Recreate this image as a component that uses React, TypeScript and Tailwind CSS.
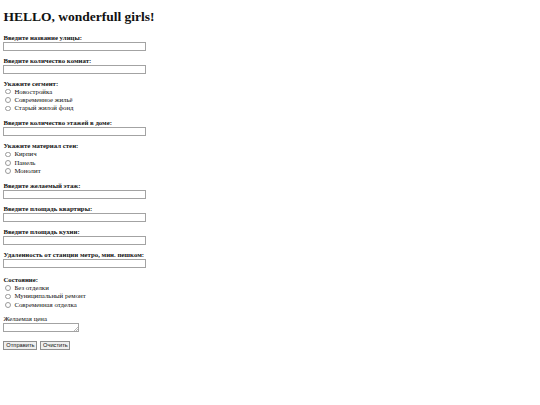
const fields1 = ['Введите название улицы:', 'Введите количество комнат:'];

function TextField({ label }: { label: string }) {
  return (
    <div className="mb-[6px]">
      <div className="h-[8px] font-bold leading-[8px]">{label}</div>
      <div className="h-[9px] w-[143px] border border-[#a3a3a3] bg-white" />
    </div>
  );
}

function RadioGroup({ label, options, last }: { label: string; options: string[]; last?: boolean }) {
  return (
    <div className={last ? 'mb-[6px]' : 'mb-[6.5px]'}>
      <div className="h-[8px] font-bold leading-[8px]">{label}</div>
      {options.map((o) => (
        <div key={o} className="flex h-[8.4px] items-center">
          <span className="ml-[2px] mr-[3.5px] h-[5.5px] w-[5.5px] rounded-full border border-[#9a9a9a] bg-white" />
          <span className="leading-[8px]">{o}</span>
        </div>
      ))}
    </div>
  );
}

export default function App() {
  return (
    <div
      className="min-h-[405px] bg-white px-[3.4px] text-[6.8px] text-[#111]"
      style={{ fontFamily: '"Liberation Serif", serif' }}
    >
      <h1 className="pt-[9px] pb-[9px] text-[13.5px] font-bold leading-[15.5px]">
        HELLO, wonderfull girls!
      </h1>
      <form>
        {fields1.map((f) => (
          <TextField key={f} label={f} />
        ))}
        <RadioGroup
          label="Укажите сегмент:"
          options={['Новостройка', 'Современное жильё', 'Старый жилой фонд']}
        />
        <TextField label="Введите количество этажей в доме:" />
        <RadioGroup label="Укажите материал стен:" options={['Кирпич', 'Панель', 'Монолит']} />
        <TextField label="Введите желаемый этаж:" />
        <TextField label="Введите площадь квартиры:" />
        <TextField label="Введите площадь кухни:" />
        <div className="mb-[8px]">
          <div className="h-[8px] font-bold leading-[8px]">Удаленность от станции метро, мин. пешком:</div>
          <div className="h-[9px] w-[143px] border border-[#a3a3a3] bg-white" />
        </div>
        <RadioGroup
          last
          label="Состояние:"
          options={['Без отделки', 'Муниципальный ремонт', 'Современная отделка']}
        />
        <div className="mb-[8.5px]">
          <div className="h-[7.5px] leading-[8px]">Желаемая цена</div>
          <div className="relative h-[9.5px] w-[76px] border border-[#a3a3a3] bg-white">
            <svg className="absolute bottom-0 right-0" width="4" height="4" viewBox="0 0 4 4">
              <path d="M4 0L0 4M4 2L2 4" stroke="#888" strokeWidth="0.6" />
            </svg>
          </div>
        </div>
        <div
          className="flex gap-[3px] text-[5.7px]"
          style={{ fontFamily: '"Liberation Sans", Arial, sans-serif' }}
        >
          <span className="flex h-[9px] w-[34px] items-center justify-center border border-[#8f8f8f] bg-[#efefef]">
            Отправить
          </span>
          <span className="flex h-[9px] w-[30px] items-center justify-center border border-[#8f8f8f] bg-[#efefef]">
            Очистить
          </span>
        </div>
      </form>
    </div>
  );
}
